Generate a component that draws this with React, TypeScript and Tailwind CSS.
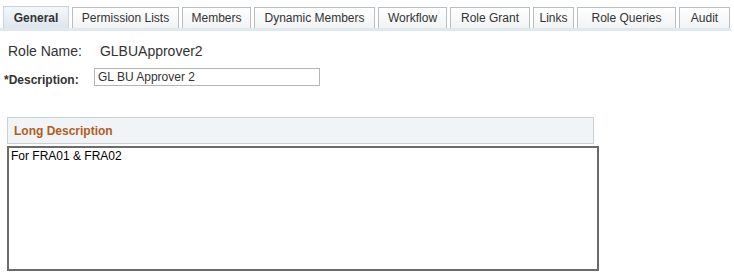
import React from "react";

const tabs: [string, number][] = [
  ["General", 66],
  ["Permission Lists", 107],
  ["Members", 69],
  ["Dynamic Members", 121],
  ["Workflow", 69],
  ["Role Grant", 80],
  ["Links", 41],
  ["Role Queries", 99],
  ["Audit", 51],
];

export default function App() {
  return (
    <div
      className="w-[734px] h-[280px] bg-white relative overflow-hidden text-[#333]"
      style={{ fontFamily: "Arial, 'Liberation Sans', sans-serif" }}
    >
      <div className="flex items-end pl-[3px] pt-[7px] gap-[3px] border-b-[3px] border-[#dfe7ef] w-[731px] h-[31px]">
        {tabs.map(([t, w], i) => (
          <div
            key={t}
            style={{ width: w }}
            className={
              i === 0
                ? "shrink-0 whitespace-nowrap h-[22px] flex items-center justify-center text-[12px] font-bold text-[#333] bg-gradient-to-b from-[#f4f7fa] to-[#dde6ee] border border-b-0 border-[#c9d3dc]"
                : "shrink-0 whitespace-nowrap h-[21px] flex items-center justify-center text-[12px] text-[#333] bg-gradient-to-b from-white to-[#f1f3f5] border border-b-0 border-[#b9bec3]"
            }
          >
            {t}
          </div>
        ))}
      </div>
      <div className="flex items-center mt-[12px] h-[16px]">
        <span className="ml-[8px] text-[14px] text-[#333]">Role Name:</span>
        <span className="ml-[18px] text-[14px] text-[#333]">GLBUApprover2</span>
      </div>
      <div className="flex items-center mt-[5px]">
        <span className="ml-[4px] w-[90px] text-[12px] font-bold text-[#333] mt-[7px]">*Description:</span>
        <div className="w-[226px] h-[18px] border border-[#b5b5b5] flex items-center pl-[3px] text-[12px] text-[#333]">
          GL BU Approver 2
        </div>
      </div>
      <div className="ml-[7px] mt-[28px] w-[587px] h-[27px] bg-[#f0f4f6] border border-[#cbd0d4] flex items-center pl-[6px] text-[12px] font-bold text-[#b35c1e]">
        Long Description
      </div>
      <div className="ml-[7px] mt-[2px] w-[592px] h-[125px] border-2 border-[#6b6b6b] pl-[2px] pt-[1px] text-[12px] text-black leading-[14px]">
        For FRA01 &amp; FRA02
      </div>
    </div>
  );
}
